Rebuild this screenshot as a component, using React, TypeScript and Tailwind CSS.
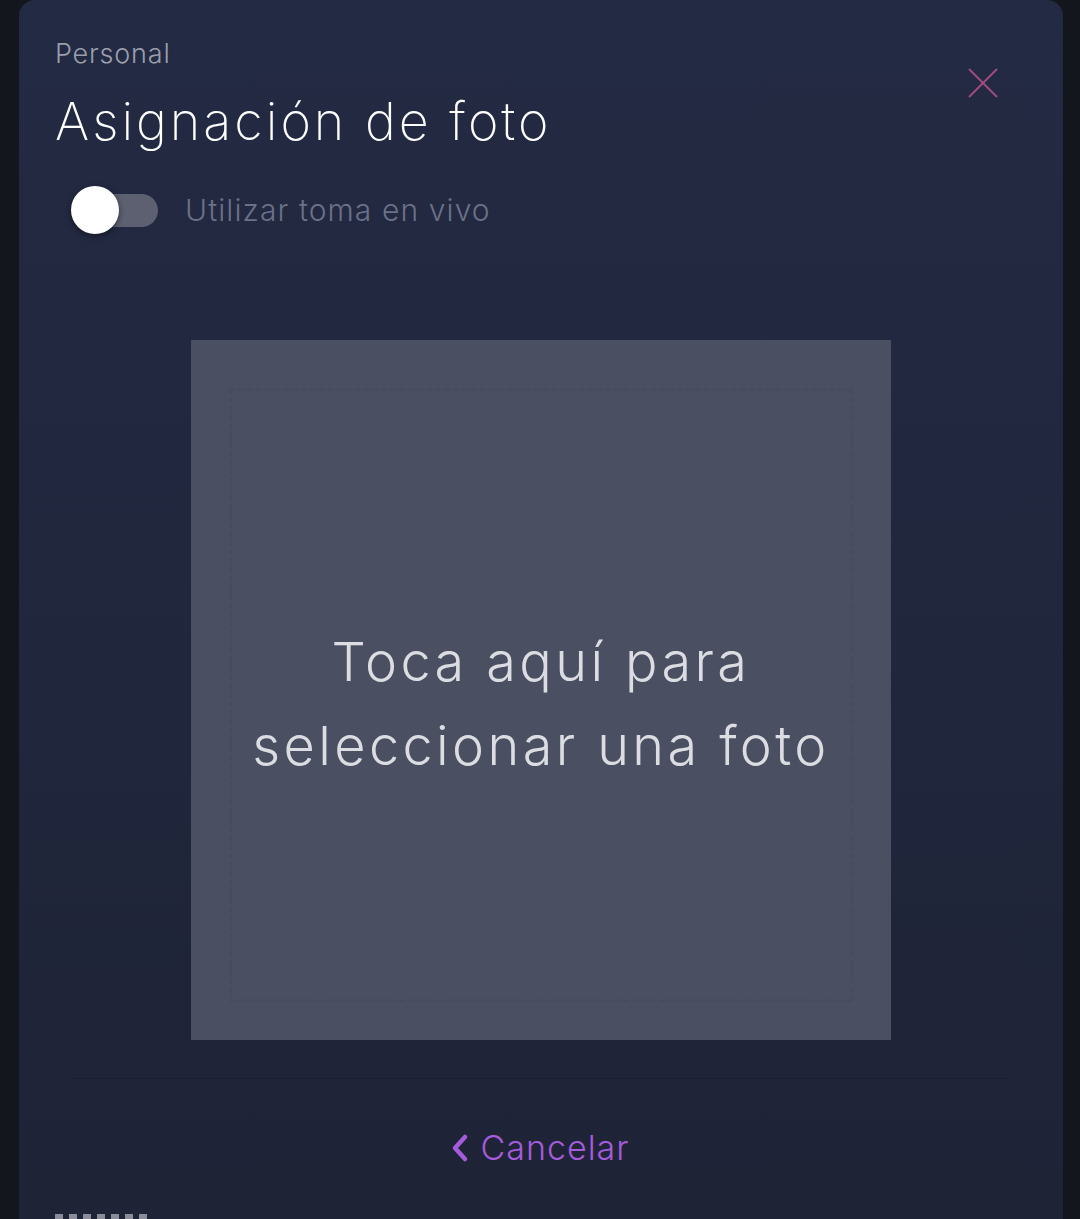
import React from "react";

export default function App() {
  const font = { fontFamily: "Inter, 'Noto Sans', sans-serif" };
  return (
    <div className="w-[1080px] h-[1219px] overflow-hidden bg-[#14161d] flex pl-[19px] pr-[17px]" style={font}>
      <div className="relative flex-1 h-[1240px] rounded-t-[16px] bg-gradient-to-b from-[#232a43] to-[#1e2336] flex flex-col">
        <button className="absolute top-[66px] right-[63px] w-[34px] h-[34px] flex items-center justify-center">
          <svg width="32" height="32" viewBox="0 0 32 32" fill="none" stroke="#a04a80" strokeWidth="2">
            <line x1="2" y1="2" x2="30" y2="30" />
            <line x1="30" y1="2" x2="2" y2="30" />
          </svg>
        </button>
        <div className="pl-[36px] pt-[38px]">
          <div className="text-[27px] leading-[32px] font-light tracking-[0.8px] text-[#9a9eab]">Personal</div>
          <div className="mt-[20px] text-[52px] leading-[64px] font-extralight text-white tracking-[3px]">Asignación de foto</div>
        </div>
        <div className="mt-[34px] flex items-center pl-[53px]">
          <div className="relative w-[86px] h-[33px] rounded-full bg-[#5c6070]">
            <div className="absolute left-[-1px] top-[-8px] w-[48px] h-[48px] rounded-full bg-white shadow-[0_2px_6px_rgba(0,0,0,0.45)]" />
          </div>
          <span className="ml-[27px] text-[30px] font-light tracking-[1.1px] text-[#6b7187]">Utilizar toma en vivo</span>
        </div>
        <div className="mt-[107px] mx-auto w-[700px] h-[700px] bg-[#4a4f62] p-[38px] pt-[48px]">
          <div className="w-full h-full border-[3px] border-dashed border-[#474c5e] flex items-center justify-center">
            <p className="text-center text-[54px] leading-[84px] font-light tracking-[3.4px] text-[#dcdde2] mt-[18px]">
              Toca aquí para<br />seleccionar una foto
            </p>
          </div>
        </div>
        <div className="mt-[38px] mx-[54px] h-px bg-[#1a1e2d]" />
        <div className="mt-[49px] flex items-center justify-center gap-[12px] text-[#a55bdb] pr-[2px]">
          <svg width="18" height="30" viewBox="0 0 18 30" fill="none" stroke="#a55bdb" strokeWidth="4.5" strokeLinecap="round" strokeLinejoin="round">
            <polyline points="14,4 4,15 14,26" />
          </svg>
          <span className="text-[34px] leading-[40px] font-light tracking-[1px]">Cancelar</span>
        </div>
        <div className="mt-[46px] pl-[36px] flex gap-[6px]">
          {[0, 1, 2, 3, 4, 5, 6].map((i) => (
            <div key={i} className="w-[8px] h-[6px] bg-[#8a8d99]" />
          ))}
        </div>
      </div>
    </div>
  );
}
